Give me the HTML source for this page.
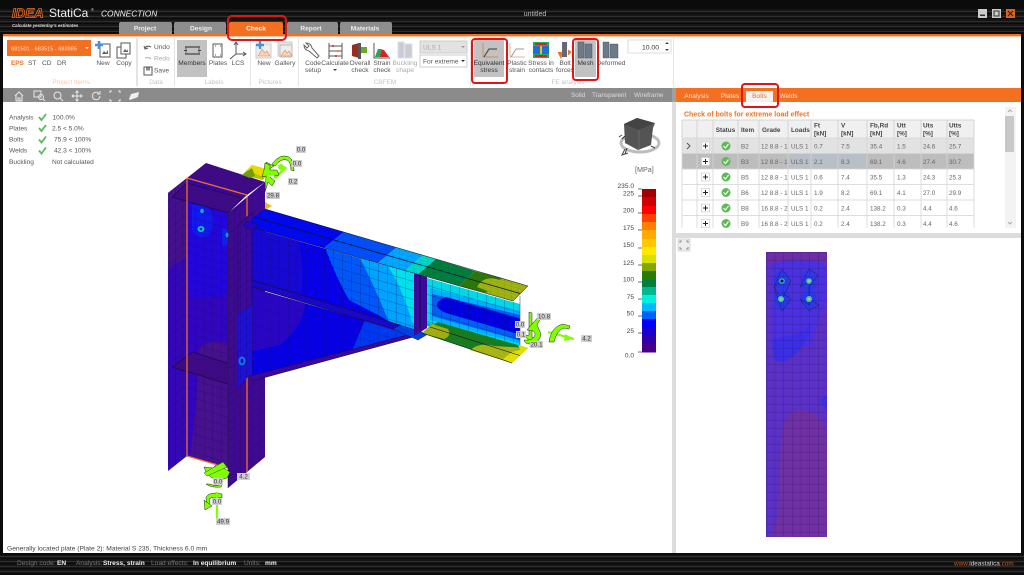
<!DOCTYPE html>
<html><head><meta charset="utf-8"><title>IDEA StatiCa Connection</title>
<style>
html,body{margin:0;padding:0;background:#fff;width:1024px;height:575px;overflow:hidden}
svg{display:block;position:absolute;left:0;top:0;filter:blur(.3px)}
text{font-family:"Liberation Sans",sans-serif;font-size:6.6px;fill:#444}
.c{text-anchor:middle}.e{text-anchor:end}
.r{fill:#555}.g{fill:#c4c4c4;font-size:6.4px}.t{fill:#666;font-size:6.3px}.h{fill:#444;font-size:6.4px;font-weight:bold}
.w{fill:#ddd;font-size:6.4px}.tab{fill:#eee;font-weight:bold;font-size:6.6px;text-anchor:middle}
.lb{fill:#333;font-size:6.2px;text-anchor:middle}.tag{fill:#d2d2d2}
.ic{fill:none;stroke:#555;stroke-width:1}
.ar{fill:#80ff00;stroke:#222;stroke-width:.5}
</style></head><body>
<svg width="1024" height="575" viewBox="0 0 1024 575" xmlns="http://www.w3.org/2000/svg">
<defs>
<pattern id="st" width="40" height="5" patternUnits="userSpaceOnUse"><rect width="40" height="5" fill="#161616"/><rect y="1" width="40" height="1" fill="#2e2e2e"/><rect y="3" width="40" height="1" fill="#0a0a0a"/></pattern>
<pattern id="gL" width="6.5" height="9" patternUnits="userSpaceOnUse" patternTransform="skewY(-38)"><path d="M0 0H6.5M0 0V9" stroke="#1a0a50" stroke-width=".45" fill="none"/></pattern>
<pattern id="gF" width="6.2" height="9" patternUnits="userSpaceOnUse" patternTransform="translate(228 0) skewY(-40)"><path d="M0 0H6.2M0 0V9" stroke="#1a0a50" stroke-width=".45" fill="none"/></pattern>
<pattern id="gW" width="8.5" height="9" patternUnits="userSpaceOnUse" patternTransform="translate(187 0) skewY(16.3)"><path d="M0 0H8.5M0 0V9" stroke="#150a50" stroke-width=".45" fill="none"/></pattern>
<pattern id="gB" width="9" height="9" patternUnits="userSpaceOnUse" patternTransform="translate(252 0) skewY(16.3)"><path d="M0 0H9M0 0V9" stroke="#0a1050" stroke-width=".45" fill="none"/></pattern>
<pattern id="gS" width="7" height="3.5" patternUnits="userSpaceOnUse" patternTransform="skewY(16.3)"><path d="M0 0H7M0 0V3.5" stroke="#2a1460" stroke-width=".25" fill="none"/></pattern>
<pattern id="gP" width="8.7" height="8" patternUnits="userSpaceOnUse" patternTransform="translate(766 252)"><path d="M0 0H8.7M0 0V8" stroke="#2a1060" stroke-width=".45" fill="none"/></pattern>
<clipPath id="cw"><polygon points="427,278 520,304 520,352 427,326"/></clipPath>
<clipPath id="cb"><polygon points="252,228 415,274 415,332 252,286"/></clipPath>
<clipPath id="ch"><polygon points="252,288 415,335 252,378"/></clipPath>
<clipPath id="cp"><rect x="766" y="252" width="61" height="285"/></clipPath>
<clipPath id="ct"><rect x="680" y="118" width="296" height="110"/></clipPath>
<clipPath id="cwf"><polygon points="187,178 228,190 228,468 187,456"/></clipPath>
<clipPath id="clf"><polygon points="168,193 187,178 187,456 168,471"/></clipPath>
<clipPath id="cff"><polygon points="228,213 265,182 265,457 228,488"/></clipPath>
<clipPath id="cep"><polygon points="238,225 252,212 252,372 238,388"/></clipPath>
</defs>

<!-- frame -->
<rect width="1024" height="575" fill="#0b0b0b"/>
<rect x="0" y="8" width="1024" height="24" fill="url(#st)"/>
<rect x="0" y="555" width="1024" height="18" fill="url(#st)"/>
<rect x="3" y="36" width="1018" height="517" fill="#fff"/>
<rect x="3" y="34" width="1018" height="2.4" fill="#f37021"/>

<!-- logo -->
<text x="12" y="17.500" style="font-size:13px;font-weight:bold;font-style:italic;fill:#0b0b0b;stroke:#f37021;stroke-width:.8;letter-spacing:.2px">IDEA</text>
<text x="49" y="17" style="font-size:12px;fill:#eee">StatiCa</text>
<text x="91" y="11" style="font-size:4px;fill:#ddd">®</text>
<text x="101" y="16.500" style="font-size:8.400px;font-style:italic;fill:#eee">CONNECTION</text>
<text x="12" y="27" style="font-size:4.400px;font-style:italic;fill:#ddd;font-weight:bold">Calculate yesterday's estimates</text>
<text x="535" y="16" class="c" style="font-size:7px;fill:#bbb">untitled</text>

<!-- window buttons -->
<rect x="978" y="9" width="9" height="9" fill="#ccc"/><rect x="980" y="14.500" width="5" height="1.500" fill="#333"/>
<rect x="992" y="9" width="9" height="9" fill="#ccc"/><rect x="994" y="11" width="5" height="5" fill="none" stroke="#333"/>
<rect x="1006" y="9" width="9" height="9" fill="#d8651c"/><path d="M1008 11l5 5M1013 11l-5 5" stroke="#222" stroke-width="1.100"/>

<!-- top tabs -->
<path d="M119 34V24q0-2 2-2h49q2 0 2 2V34z" fill="#8e8e8e"/>
<path d="M174 34V24q0-2 2-2h48q2 0 2 2V34z" fill="#8e8e8e"/>
<path d="M229 34V24q0-2 2-2h50q2 0 2 2V34z" fill="#f37021"/>
<path d="M287 34V24q0-2 2-2h47q2 0 2 2V34z" fill="#8e8e8e"/>
<path d="M340 34V24q0-2 2-2h48q2 0 2 2V34z" fill="#8e8e8e"/>
<text x="145" y="30.500" class="tab">Project</text><text x="201" y="30.500" class="tab">Design</text><text x="256" y="30.500" class="tab" style="fill:#fff">Check</text><text x="311" y="30.500" class="tab">Report</text><text x="365" y="30.500" class="tab">Materials</text>

<!-- ribbon -->
<rect x="7" y="40" width="84" height="16" fill="#f37021"/>
<text x="11" y="50.500" style="font-size:5.600px;fill:#ffd9c0">681501 - 683515 - 683985</text><path d="M85 47h4l-2 2z" fill="#fff"/>
<text x="11" y="65" style="fill:#f37021;font-weight:bold;font-size:6.400px">EPS</text><text x="28" y="65" class="r">ST</text><text x="42" y="65" class="r">CD</text><text x="57" y="65" class="r">DR</text>
<text x="71" y="84" class="c" style="fill:#f9c8a8;font-size:6.400px">Project Items</text>
<g fill="#e4e4e4"><rect x="136" y="38" width="2" height="48"/><rect x="174" y="38" width="1" height="48"/><rect x="250" y="38" width="1" height="48"/><rect x="298" y="38" width="1" height="48"/><rect x="470" y="38" width="1" height="48"/><rect x="673" y="38" width="1" height="48"/></g>

<!-- New/Copy icons -->
<rect x="100" y="44" width="10" height="13" fill="#fff" stroke="#555"/><path d="M102 54l2-3 2 2 2-3v4z" fill="#567"/><path d="M99 41v8M95 45h8" stroke="#4a90d9" stroke-width="2.600"/>
<rect x="117" y="47" width="9" height="11" fill="#fff" stroke="#555"/><rect x="121" y="43" width="9" height="11" fill="#fff" stroke="#555"/><path d="M123 52l2-3 2 2 1-2v3z" fill="#567"/>
<text x="103" y="65" class="c r">New</text><text x="124" y="65" class="c r">Copy</text>
<!-- Data -->
<path d="M145 48q2-3 6-1M144 46l1 3 3-1" class="ic" stroke-width="1.200"/>
<text x="154" y="49" class="r">Undo</text>
<path d="M151 59q-2-2-6-1" fill="none" stroke="#aaa"/><text x="154" y="60.500" style="fill:#aaa">Redo</text>
<rect x="144" y="67" width="8" height="8" class="ic"/><rect x="146" y="67.500" width="4" height="3" fill="#888"/>
<text x="154" y="72.500" class="r">Save</text>
<text x="156" y="84" class="c g">Data</text>
<!-- Labels -->
<rect x="177" y="40" width="30" height="37" fill="#c2c2c2"/>
<path d="M185 47h15M185 54h15" stroke="#444" stroke-width="1.400"/><rect x="186" y="47" width="13" height="7" fill="none" stroke="#666"/><path d="M184 50.500h3M198 50.500h3" stroke="#444"/>
<text x="192" y="65" class="c" style="fill:#333">Members</text>
<rect x="213" y="44" width="9" height="13" class="ic"/><path d="M215 46h1M220 46h1M215 55h1M220 55h1" stroke="#555"/>
<text x="218" y="65" class="c r">Plates</text>
<path d="M236 43v11h9M236 54l-6 5M234 45l2-3 2 3M243 52l3 2-3 2" class="ic"/>
<text x="238" y="65" class="c r">LCS</text>
<text x="214" y="84" class="c g">Labels</text>
<!-- Pictures -->
<rect x="256" y="44" width="15" height="14" fill="#eee" stroke="#ccc"/><path d="M258 56l4-7 3 4 2-2 3 5z" fill="#f7d2b8" stroke="#e58a55" stroke-width=".6"/><path d="M260 41v8M256 45h8" stroke="#4a90d9" stroke-width="2.400"/>
<rect x="278" y="42" width="14" height="14" fill="#e4e4e4" stroke="#ccc"/><rect x="280" y="45" width="12" height="12" fill="#eee" stroke="#bbb"/><path d="M281 56l4-6 2 3 2-2 3 5z" fill="#f7d2b8" stroke="#e58a55" stroke-width=".6"/>
<text x="264" y="65" class="c r">New</text><text x="285" y="65" class="c r">Gallery</text>
<text x="270" y="84" class="c g">Pictures</text>
<!-- CBFEM -->
<path d="M306 43q5 0 6 5l7 8-2 2-8-7q-5-1-5-6l3 3 2-2z" fill="#fff" stroke="#666"/>
<path d="M329 43v16M342 43v16M329 46h13M329 51h13M329 56h13" stroke="#555"/><circle cx="333" cy="46" r="1.100" fill="#d33"/><circle cx="338" cy="51" r="1.100" fill="#d80"/><circle cx="336" cy="56" r="1.100" fill="#d33"/>
<path d="M352 45l7-2v15l-7-2z" fill="#9b2d20"/><path d="M358 47h9v6h-7z" fill="#6aa830"/><rect x="358" y="43" width="3" height="16" fill="#555"/>
<path d="M374 43v15h16" class="ic"/><path d="M375 57l3-8 6 1 5 7z" fill="#e02020"/><path d="M375 57l3-8 4 0-2 8z" fill="#30a060"/>
<g fill="#c9cdd2" stroke="#dde"><rect x="398" y="42" width="6" height="16"/><rect x="405" y="44" width="7" height="14"/></g>
<text x="313" y="65" class="c r">Code</text><text x="313" y="72" class="c r">setup</text>
<text x="335" y="65" class="c r">Calculate</text><path d="M333 69h4l-2 2z" fill="#444"/>
<text x="360" y="65" class="c r">Overall</text><text x="360" y="72" class="c r">check</text>
<text x="382" y="65" class="c r">Strain</text><text x="382" y="72" class="c r">check</text>
<text x="405" y="65" class="c" style="fill:#aaa">Buckling</text><text x="405" y="72" class="c" style="fill:#aaa">shape</text>
<text x="385" y="84" class="c g">CBFEM</text>
<rect x="420" y="41" width="47" height="12" fill="#e2e2e2" stroke="#ccc"/><text x="423" y="49.500" style="fill:#aaa">ULS 1</text><path d="M461 46h4l-2 2z" fill="#999"/>
<rect x="420" y="55" width="47" height="12" fill="#fff" stroke="#ccc"/><text x="423" y="63.500" class="r">For extreme</text><path d="M461 60h4l-2 2z" fill="#333"/>
<!-- FE analysis -->
<rect x="474" y="40" width="30" height="37" fill="#c2c2c2"/>
<path d="M483 43v14h15" fill="none" stroke="#d98a5a"/><path d="M484 57l5-8h8" fill="none" stroke="#555" stroke-width="1.200"/>
<text x="489" y="65" class="c" style="fill:#333">Equivalent</text><text x="489" y="72" class="c" style="fill:#333">stress</text>
<path d="M510 43v14h15" fill="none" stroke="#e8b090"/><path d="M511 57l5-8h8" fill="none" stroke="#999"/>
<text x="517" y="65" class="c r">Plastic</text><text x="517" y="72" class="c r">strain</text>
<rect x="533" y="42" width="16" height="16" fill="#2070d0"/><rect x="533" y="42" width="16" height="4" fill="#20b060"/><rect x="533" y="54" width="16" height="4" fill="#20b060"/><rect x="535" y="43" width="12" height="2" fill="#e02020"/><rect x="535" y="55" width="12" height="2" fill="#e02020"/><rect x="540" y="46" width="2" height="8" fill="#e8c020"/>
<text x="541" y="65" class="c r">Stress in</text><text x="541" y="72" class="c r">contacts</text>
<rect x="562" y="42" width="5" height="15" fill="#667"/><path d="M558 52l3 6 1-6M568 50l3 2-3 3" fill="#d08030" stroke="#d08030"/>
<text x="565" y="65" class="c r">Bolt</text><text x="565" y="72" class="c r">forces</text>
<rect x="575" y="40" width="21" height="37" fill="#c2c2c2"/>
<g fill="#6d7a8a" stroke="#445" stroke-width=".4"><rect x="578" y="42" width="6" height="16"/><rect x="585" y="44" width="7" height="14"/></g>
<text x="585.500" y="65" class="c" style="fill:#333">Mesh</text>
<g fill="#6d7a8a" stroke="#445" stroke-width=".4"><rect x="603" y="42" width="6" height="16"/><rect x="610" y="44" width="8" height="14"/></g>
<text x="611" y="65" class="c r">Deformed</text>
<text x="568" y="84" class="c g">FE analysis</text>
<rect x="628" y="40" width="43" height="13" fill="#fff" stroke="#ddd"/><text x="659" y="49.500" class="e" style="fill:#333;font-size:6.800px">10.00</text><path d="M665 44h4l-2-2zM665 49h4l-2 2z" fill="#444"/>

<!-- viewport toolbar -->
<rect x="3" y="88" width="669" height="14" fill="#8b8b8b"/>
<g fill="none" stroke="#e8e8e8" stroke-width="1">
<path d="M15 96l4-4 4 4M16 95v6h6v-6M18 101v-3h2v3"/>
<rect x="34" y="91" width="7" height="6"/><circle cx="41" cy="97" r="2.500"/><path d="M43 99l2 2"/>
<circle cx="57.500" cy="95.500" r="3.500"/><path d="M60 98l3 3"/>
<path d="M72 96h10M77 91v10M73.500 94.500l-1.500 1.500 1.500 1.500M80.500 94.500l1.500 1.500-1.500 1.500M75.500 92.500l1.500-1.500 1.500 1.500M75.500 99.500l1.500 1.500 1.500-1.500"/>
<path d="M100 96a3.800 3.800 0 1 1-1.200-2.800M100 91v3h-3"/>
<path d="M110 93v-2h2M118 91h2v2M110 99v2h2M118 101h2v-2"/>
</g>
<path d="M129 99l2-5 8-2-1 5-8 3z" fill="#eee"/>
<text x="571" y="97" class="w">Solid</text><text x="592" y="97" class="w">Transparent</text><text x="634" y="97" class="w">Wireframe</text>

<!-- results summary -->
<text x="9" y="119.500" class="r">Analysis</text><text x="9" y="130.500" class="r">Plates</text><text x="9" y="141.500" class="r">Bolts</text><text x="9" y="152.500" class="r">Welds</text><text x="9" y="164" class="r">Buckling</text>
<g fill="none" stroke="#5cb85c" stroke-width="1.800"><path d="M39 117l2.500 3 4.500-6"/><path d="M39 128l2.500 3 4.500-6"/><path d="M39 139.500l2.500 3 4.500-6"/><path d="M39 150.500l2.500 3 4.500-6"/></g>
<text x="52.500" y="119.500" class="r">100.0%</text><text x="52" y="130.500" class="r">2.5 &lt; 5.0%</text><text x="54" y="141.500" class="r">75.9 &lt; 100%</text><text x="54" y="152.500" class="r">42.3 &lt; 100%</text><text x="52" y="164" class="r">Not calculated</text>

<!-- COLUMN -->
<polygon points="187,178 206,163 265,182 247,195 228,213" fill="#3f0a86"/><polygon points="187,178 206,163 265,182 247,195" fill="url(#gS)"/>
<polygon points="168,193 187,178 187,456 168,471" fill="#3408b8"/>
<g clip-path="url(#clf)"><path d="M165 190l25-15v80l-25 15z" fill="#44108e"/></g>
<polygon points="168,193 187,178 187,456 168,471" fill="url(#gL)"/>
<polygon points="187,178 228,190 228,468 187,456" fill="#3206c0"/>
<g clip-path="url(#cwf)">
<path d="M186 195L230 210V292Q205 302 192 296L186 290z" fill="#2206dc"/>
<path d="M192 205q12-3 20 8 4 12-3 22-10 6-17-4z" fill="#1218f0"/>
<path d="M222 228q6 0 8 8v10h-8z" fill="#1020ea"/>
<path d="M199 350q4-7 14-8 8-1 15 2v130h-41q10-60 12-124z" fill="#47108e"/>
<rect x="186" y="178" width="44" height="20" fill="#3408b0"/>
</g>
<polygon points="187,178 228,190 228,468 187,456" fill="url(#gW)"/>
<polygon points="172,197 187,183 242,198 228,213" fill="#3f0a86" stroke="#1a0840" stroke-width=".7"/><polygon points="172,197 187,183 242,198 228,213" fill="url(#gS)"/>
<polygon points="172,367 193,352 230,364 228,384" fill="#3f0a86" stroke="#1a0840" stroke-width=".7"/><polygon points="172,367 193,352 230,364 228,384" fill="url(#gS)"/>
<path d="M187 178l60 17M187 178V456M187 456l41 12" stroke="#f37021" stroke-width="1.300" fill="none"/>
<polygon points="228,213 265,182 265,457 228,488" fill="#3f0a92"/>
<polygon points="228,213 265,182 265,457 228,488" fill="url(#gF)"/>
<path d="M247 197V472" stroke="#f37021" stroke-width="1.300"/>
<path d="M228 213V488" stroke="#222" stroke-width=".5"/>
<ellipse cx="202" cy="211" rx="1.800" ry="2.200" fill="#18a8f0"/><ellipse cx="201" cy="229" rx="3.500" ry="3" fill="#10c0d8"/><circle cx="201" cy="229" r="1.400" fill="#2030a0"/><ellipse cx="227" cy="235" rx="1.500" ry="2.500" fill="#1090f0"/>

<!-- top markers -->
<polygon points="242,175 252,165 270,170 263,180" fill="#b8c400"/><polygon points="247,170 252,165 270,170 263,177" fill="#e8d800"/><polygon points="242,175 252,168 255,176 250,178" fill="#6c9c10"/>
<polygon points="265,202 272,206 265,210" fill="#f0b820"/>

<!-- BEAM -->
<polygon points="252,228 415,274 415,332 252,286" fill="#0800e8"/>
<g clip-path="url(#cb)">
<path d="M250 226L298 240Q305 265 301 300L250 288z" fill="#1808d4"/>
<path d="M326 250Q335 275 349 300L378 315L420 340V250L345 230z" fill="#0058f8"/>
<path d="M357 253Q372 280 388 320L420 340V260L365 240z" fill="#00a4ff"/>
<path d="M382 258Q400 280 412 322L420 330V260L392 250z" fill="#00e0ec"/>
</g>
<polygon points="252,228 415,274 415,332 252,286" fill="url(#gB)"/>
<polygon points="252,288 415,335 252,378" fill="#0800e4"/>
<g clip-path="url(#ch)"><path d="M250 285L305 302Q305 325 280 345L250 352z" fill="#2806c4"/><path d="M365 320L420 336L350 356z" fill="#0038f0"/></g>
<polygon points="252,288 415,335 252,378" fill="url(#gB)" opacity=".7"/>
<polygon points="250,376 415,333 417,336 252,381" fill="#3b0a9c" stroke="#101040" stroke-width=".5"/>
<polygon points="243,284 248,279 400,325 393,329" fill="#1c06c8" stroke="#101040" stroke-width=".6"/>
<polygon points="393,329 400,325 428,334 418,340" fill="#0040e0" stroke="#101040" stroke-width=".4"/>

<!-- web right -->
<polygon points="427,278 520,304 520,352 427,326" fill="#00d8e8"/>
<g clip-path="url(#cw)">
<path d="M430 288L525 312V345L430 320z" fill="#00b0ff"/>
<path d="M432 294L525 316V342L432 316z" fill="#0060f4"/>
<path d="M446 297L525 320V336L446 313Q428 305 446 297z" fill="#0000e0"/>
<path d="M425 322L525 350V356L425 330z" fill="#00b8a0"/>
</g>
<polygon points="427,278 520,304 520,352 427,326" fill="url(#gB)"/>
<polygon points="414,273 427,277 427,328 414,336" fill="#3a0a9a"/><path d="M420 275V332" stroke="#1b0a50"/>
<path d="M520 296V346" stroke="#555" stroke-width=".6"/>

<!-- top flange -->
<polygon points="243,225 265,209 344,232 324,248" fill="#0008f0"/>
<polygon points="324,248 344,232 396.500,247.500 378,263" fill="#0050fa"/>
<polygon points="378,263 396.500,247.500 423,255 405,271" fill="#00a8ff"/>
<polygon points="405,271 423,255 436,259 418.500,274" fill="#00d8c8"/>
<polygon points="418.500,274 436,259 475,271 459,286" fill="#007f3c"/>
<polygon points="459,286 475,271 502,278 486,293" fill="#2a7a08"/>
<polygon points="486,293 502,278 528,286 513,301" fill="#92ae10"/>
<path d="M477 287q6-11 19-8l32 7-15 15z" fill="#a0b410"/>
<path d="M254 217L520 293.500" stroke="#0b1040" stroke-width=".8"/>
<path d="M243 225L513 301M265 209L528 286M513 301L528 286" stroke="#111" stroke-width=".5"/>
<polygon points="243,225 265,209 528,286 513,301" fill="url(#gS)" opacity=".5"/>

<!-- bottom flange right -->
<polygon points="422,333 438,322 528,348 512,363" fill="#1a7a20"/>
<path d="M422 333l10-9 16 5q4 7-4 10z" fill="#a0ac10"/>
<path d="M470 350q10-8 24-4l34 2-16 15z" fill="#a6b414"/>
<polygon points="503,359 512,352 528,348 512,363" fill="#e0e000"/>
<polygon points="518,345 528,348 522,353" fill="#e0e000"/>
<path d="M430 327L520 355.500M422 333L512 363" stroke="#112" stroke-width=".6"/>

<!-- end plate -->
<polygon points="238,225 252,212 252,372 238,388" fill="#3c0a9c" stroke="#1a0a50" stroke-width=".5"/>
<g clip-path="url(#cep)"><path d="M235 315q10-5 20-12v75l-20 15z" fill="#1d10d8"/></g>
<polygon points="238,225 252,212 252,372 238,388" fill="url(#gF)"/>
<ellipse cx="242" cy="361" rx="3.500" ry="4.500" fill="#0c78f0"/><ellipse cx="242" cy="361" rx="1.500" ry="2.500" fill="#1010a0"/>
<polygon points="243,225 248,221 258,225 252,231" fill="#2406c4" stroke="#111" stroke-width=".4"/>

<!-- top load arrows -->
<path d="M272 164q8-11 17-7 5 3 5 14l-3-1q0-8-4-10-6-2-12 6z" class="ar"/>
<path d="M271 168l-4 3-1-9 8 4z" class="ar"/>
<path d="M273 178l12-12 2 2-11 11z" fill="#80ff00"/>
<circle cx="281" cy="167" r="3" fill="#80ff00"/>
<polygon class="ar" points="265,163 270,165 270,170 277,170 279,175 270,177 275,181 272,186 268,182 265,192 266,176 262,177 264,170"/>
<rect x="269" y="175" width="5" height="2" fill="#fff"/>

<!-- right load arrows -->
<polygon class="ar" points="529,312 532,313 532,337 538,340 531,343 526,337 524,336 529,335"/>
<path d="M527 330l12-14 2 2-4 7 4 9q-1 9-11 10-5 0-6-4 9 1 11-5 1-5-8-5z" class="ar"/>
<path d="M548 332l26 7" stroke="#80ff00" stroke-width="2"/>
<polygon points="565,334 574,339 564,341" fill="#80ff00"/>
<path d="M549 342q2-15 14-18l7 2-1 3-5-1q-7 2-10 14z" class="ar"/>

<!-- bottom load arrows -->
<path d="M217 464l8 5 5 3-3 6-7 2q-10-1-14-8l-2-5 9 1z" class="ar"/>
<path d="M204 473l19-11 4 5-20 9z" fill="#80ff00" stroke="#222" stroke-width=".4"/>
<path d="M206 484q5 4 15 3l2-6q-3 7-14 3z" class="ar"/>
<path d="M222 494q-12-3-16 3 0 3 1 7l3-1-1-4q4-3 13-1z" class="ar"/>
<polygon class="ar" points="204,500 212,506 205,510"/>
<path d="M217 492V519" stroke="#80ff00" stroke-width="2.200"/>

<!-- tags -->
<g fill="#d0d0d0"><rect x="296" y="146" width="10" height="7"/><rect x="292" y="160" width="10" height="7"/><rect x="288" y="178" width="10" height="7"/><rect x="266" y="192" width="14" height="7"/><rect x="537" y="313" width="14" height="7"/><rect x="515" y="321" width="10" height="7"/><rect x="516" y="331" width="10" height="7"/><rect x="530" y="341" width="13" height="7"/><rect x="581" y="335" width="11" height="7"/><rect x="237" y="473" width="13" height="7"/><rect x="213" y="478" width="10" height="7"/><rect x="212" y="498" width="10" height="7"/><rect x="216" y="518" width="14" height="7"/></g>
<g>
<text x="301" y="151.500" class="lb">0.0</text><text x="297" y="165.500" class="lb">0.0</text><text x="293" y="183.500" class="lb">0.2</text><text x="273" y="197.500" class="lb">29.8</text>
<text x="544" y="318.500" class="lb">10.8</text><text x="520" y="326.500" class="lb">0.0</text><text x="521" y="336.500" class="lb">0.1</text><text x="536.500" y="346.500" class="lb">20.1</text><text x="586.500" y="340.500" class="lb">4.2</text>
<text x="243.500" y="478.500" class="lb">4.2</text><text x="218" y="483.500" class="lb">0.0</text><text x="217" y="503.500" class="lb">0.0</text><text x="223" y="523.500" class="lb">49.9</text>
</g>

<!-- nav cube -->
<ellipse cx="640" cy="143" rx="19" ry="9" fill="none" stroke="#bdbdbd" stroke-width="3"/>
<path d="M624 124l13-6 18 5-2 5-2 17-13 5-13-7z" fill="#545454"/><path d="M624 124l15 6 15-7-17-5z" fill="#444"/><path d="M639 130l0 20" stroke="#777" stroke-width=".6"/><path d="M625 136l-3 3M625 154l2-6" stroke="#333"/>
<path d="M651 146l4 2M622 135l-3 2M625 149l-3 6 6-2" fill="none" stroke="#444"/>
<text x="635" y="172" style="font-size:7.200px;fill:#666">[MPa]</text>

<!-- legend -->
<g>
<rect x="642" y="189" width="14" height="8" fill="#a00000"/><rect x="642" y="197" width="14" height="9" fill="#d00000"/><rect x="642" y="206" width="14" height="8" fill="#ff0000"/><rect x="642" y="214" width="14" height="8" fill="#ff4000"/><rect x="642" y="222" width="14" height="8" fill="#ff8000"/><rect x="642" y="230" width="14" height="9" fill="#ffaa00"/><rect x="642" y="239" width="14" height="8" fill="#ffc800"/><rect x="642" y="247" width="14" height="8" fill="#ffe800"/><rect x="642" y="255" width="14" height="8" fill="#d8e000"/><rect x="642" y="263" width="14" height="8" fill="#80a800"/><rect x="642" y="271" width="14" height="8" fill="#2a7a00"/><rect x="642" y="279" width="14" height="8" fill="#008040"/><rect x="642" y="287" width="14" height="8" fill="#00b890"/><rect x="642" y="295" width="14" height="8" fill="#00f0e0"/><rect x="642" y="303" width="14" height="8" fill="#00b8ff"/><rect x="642" y="311" width="14" height="8" fill="#0060ff"/><rect x="642" y="319" width="14" height="9" fill="#0000ff"/><rect x="642" y="328" width="14" height="8" fill="#1800d0"/><rect x="642" y="336" width="14" height="8" fill="#3000a8"/><rect x="642" y="344" width="14" height="8.500" fill="#480088"/>
</g>
<path d="M638 189h4M638 196h4M638 213h4M638 230h4M638 248h4M638 265h4M638 282h4M638 299h4M638 316h4M638 333h4M638 352h4" stroke="#444" stroke-width=".7"/>
<g style="fill:#444"><text x="634" y="188" class="e">235.0</text><text x="634" y="195.500" class="e">225</text><text x="634" y="212.500" class="e">200</text><text x="634" y="230" class="e">175</text><text x="634" y="247" class="e">150</text><text x="634" y="265" class="e">125</text><text x="634" y="281.500" class="e">100</text><text x="634" y="299" class="e">75</text><text x="634" y="315.500" class="e">50</text><text x="634" y="333" class="e">25</text><text x="634" y="357.500" class="e">0.0</text></g>

<text x="7" y="550.500" style="font-size:6.700px;fill:#444">Generally located plate (Plate 2): Material S 235, Thickness 6.0 mm</text>

<!-- right divider -->
<rect x="672" y="88" width="4" height="465" fill="#dcdcdc"/>
<rect x="672" y="88" width="4" height="14" fill="#a0a0a0"/>
<rect x="676" y="233" width="345" height="5" fill="#dcdcdc"/>

<!-- right tabs -->
<rect x="676" y="88" width="345" height="14" fill="#f37021"/>
<rect x="746" y="91" width="27" height="11" fill="#f2f2f2"/>
<text x="696.500" y="98" class="c" style="fill:#fde0cc">Analysis</text><text x="730" y="98" class="c" style="fill:#fde0cc">Plates</text><text x="759.500" y="98" class="c" style="fill:#f37021">Bolts</text><text x="788.500" y="98" class="c" style="fill:#fde0cc">Welds</text>

<!-- table -->
<text x="684" y="116.500" style="fill:#f37021;font-weight:bold;font-size:7px">Check of bolts for extreme load effect</text>
<rect x="682" y="120" width="292" height="18" fill="#f0f0f0"/>
<g clip-path="url(#ct)">
<rect x="682" y="138" width="292" height="15.500" fill="#e2e2e2"/>
<rect x="682" y="153.500" width="292" height="15.500" fill="#bdbdbd"/>
<rect x="788" y="154" width="80" height="14" fill="#b4c0cc" opacity=".6"/>
<g stroke="#d4d4d4" stroke-width=".8"><path d="M682 120h292M682 138h292M682 153.500h292M682 169h292M682 184.500h292M682 200h292M682 215.500h292"/><path d="M682 120v110M697 120v110M713 120v110M738 120v110M759 120v110M788 120v110M811 120v110M838 120v110M867 120v110M894 120v110M921 120v110M947 120v110M974 120v110"/></g>
<path d="M687 143l3 3-3 3" fill="none" stroke="#555"/>
<g fill="#fff" stroke="#ccc" stroke-width=".7"><rect x="701.500" y="142" width="8" height="8"/><rect x="701.500" y="157.500" width="8" height="8"/><rect x="701.500" y="173" width="8" height="8"/><rect x="701.500" y="188.500" width="8" height="8"/><rect x="701.500" y="204" width="8" height="8"/><rect x="701.500" y="219.500" width="8" height="8"/></g>
<path d="M705.500 143.500v5M703 146h5M705.500 159v5M703 161.500h5M705.500 174.500v5M703 177h5M705.500 190v5M703 192.500h5M705.500 205.500v5M703 208h5M705.500 221v5M703 223.500h5" stroke="#222"/>
<g fill="#5dbb55"><circle cx="726" cy="146" r="4.500"/><circle cx="726" cy="161.500" r="4.500"/><circle cx="726" cy="177" r="4.500"/><circle cx="726" cy="192.500" r="4.500"/><circle cx="726" cy="208" r="4.500"/><circle cx="726" cy="223.500" r="4.500"/></g>
<path d="M723.500 146l2 2 3-4M723.500 161.500l2 2 3-4M723.500 177l2 2 3-4M723.500 192.500l2 2 3-4M723.500 208l2 2 3-4M723.500 223.500l2 2 3-4" fill="none" stroke="#fff" stroke-width="1.100"/>
<g class="rows">
<text x="741" y="148.500" class="t">B2</text><text x="761" y="148.500" class="t">12 8.8 - 1</text><text x="791" y="148.500" class="t">ULS 1</text><text x="814" y="148.500" class="t">0.7</text><text x="841" y="148.500" class="t">7.5</text><text x="870" y="148.500" class="t">35.4</text><text x="897" y="148.500" class="t">1.5</text><text x="923" y="148.500" class="t">24.6</text><text x="949" y="148.500" class="t">25.7</text>
<text x="741" y="164" class="t">B3</text><text x="761" y="164" class="t">12 8.8 - 1</text><text x="791" y="164" class="t">ULS 1</text><text x="814" y="164" class="t">2.1</text><text x="841" y="164" class="t">8.3</text><text x="870" y="164" class="t">69.1</text><text x="897" y="164" class="t">4.6</text><text x="923" y="164" class="t">27.4</text><text x="949" y="164" class="t">30.7</text>
<text x="741" y="179.500" class="t">B5</text><text x="761" y="179.500" class="t">12 8.8 - 1</text><text x="791" y="179.500" class="t">ULS 1</text><text x="814" y="179.500" class="t">0.6</text><text x="841" y="179.500" class="t">7.4</text><text x="870" y="179.500" class="t">35.5</text><text x="897" y="179.500" class="t">1.3</text><text x="923" y="179.500" class="t">24.3</text><text x="949" y="179.500" class="t">25.3</text>
<text x="741" y="195" class="t">B6</text><text x="761" y="195" class="t">12 8.8 - 1</text><text x="791" y="195" class="t">ULS 1</text><text x="814" y="195" class="t">1.9</text><text x="841" y="195" class="t">8.2</text><text x="870" y="195" class="t">69.1</text><text x="897" y="195" class="t">4.1</text><text x="923" y="195" class="t">27.0</text><text x="949" y="195" class="t">29.9</text>
<text x="741" y="210.500" class="t">B8</text><text x="761" y="210.500" class="t">16 8.8 - 2</text><text x="791" y="210.500" class="t">ULS 1</text><text x="814" y="210.500" class="t">0.2</text><text x="841" y="210.500" class="t">2.4</text><text x="870" y="210.500" class="t">138.2</text><text x="897" y="210.500" class="t">0.3</text><text x="923" y="210.500" class="t">4.4</text><text x="949" y="210.500" class="t">4.6</text>
<text x="741" y="226" class="t">B9</text><text x="761" y="226" class="t">16 8.8 - 2</text><text x="791" y="226" class="t">ULS 1</text><text x="814" y="226" class="t">0.2</text><text x="841" y="226" class="t">2.4</text><text x="870" y="226" class="t">138.2</text><text x="897" y="226" class="t">0.3</text><text x="923" y="226" class="t">4.4</text><text x="949" y="226" class="t">4.6</text>
</g>
</g>
<g stroke="#d4d4d4" stroke-width=".8"><path d="M682 120h292M682 120v18M697 120v18M713 120v18M738 120v18M759 120v18M788 120v18M811 120v18M838 120v18M867 120v18M894 120v18M921 120v18M947 120v18M974 120v18"/></g>
<text x="725.500" y="132" class="h c">Status</text><text x="741" y="132" class="h">Item</text><text x="762" y="132" class="h">Grade</text><text x="791" y="132" class="h">Loads</text>
<text x="814" y="127.500" class="h">Ft</text><text x="814" y="135.500" class="h">[kN]</text><text x="841" y="127.500" class="h">V</text><text x="841" y="135.500" class="h">[kN]</text><text x="870" y="127.500" class="h">Fb,Rd</text><text x="870" y="135.500" class="h">[kN]</text><text x="897" y="127.500" class="h">Utt</text><text x="897" y="135.500" class="h">[%]</text><text x="923" y="127.500" class="h">Uts</text><text x="923" y="135.500" class="h">[%]</text><text x="949" y="127.500" class="h">Utts</text><text x="949" y="135.500" class="h">[%]</text>
<rect x="1005" y="107" width="11" height="121" fill="#f3f3f3"/><rect x="1005" y="116" width="9" height="36" fill="#c8c8c8"/>
<path d="M1008 112l2-2 2 2M1008 222l2 2 2-2" fill="none" stroke="#aaa"/>

<!-- lower panel -->
<rect x="678" y="239" width="12" height="12" fill="#eee" stroke="#ccc" stroke-width=".7"/>
<path d="M680 243v-2h2M686 241h2v2M680 247v2h2M686 249h2v-2" fill="none" stroke="#777" stroke-width=".8"/>
<rect x="766" y="252" width="61" height="285" fill="#5a30c8"/>
<g clip-path="url(#cp)">
<rect x="766" y="252" width="61" height="12" fill="#6d2da8"/>
<path d="M771 264q20-6 52-2l4 8v30l-10 22-4 22-16 4q-12 2-20 8-4 2-5-10z" fill="#4a30e0"/>
<path d="M772 340q12-3 22-5 13-4 16-12l0 8q-10 26-28 31-8 1-9-8z" fill="#3a2ee8"/>
<path d="M781 440q2-30 20-30 18 0 25 20l1 10v97h-57l8-20z" fill="#7030a4"/>
<path d="M820 400l7-6v18z" fill="#3a2ee8"/>
<ellipse cx="782" cy="281" rx="8" ry="10" fill="#2c38e8"/><ellipse cx="782" cy="299" rx="8" ry="10" fill="#2c38e8"/><ellipse cx="809" cy="281" rx="8" ry="11" fill="#2c38e8"/><ellipse cx="809" cy="299" rx="8" ry="10" fill="#2c38e8"/>
<rect x="766" y="252" width="61" height="285" fill="url(#gP)"/>
<path d="M782 281l-8 6 8-18 9 12-9 18-8-12 8 24 9-12-9-6M809 281l-9 6 9-18 9 6-9 12v18l-9-6 9 12 10-6-10-6" fill="none" stroke="#181050" stroke-width=".4"/>
<circle cx="782" cy="281" r="2.800" fill="#22c0d0"/><circle cx="782" cy="281" r="1.500" fill="#111"/>
<circle cx="809" cy="281" r="2.800" fill="#40c8b0"/><circle cx="809" cy="281" r="1.200" fill="#c0c060"/>
<circle cx="781" cy="299" r="3" fill="#40c8b0"/><circle cx="781" cy="299" r="1.300" fill="#c0c060"/>
<circle cx="809" cy="299" r="3" fill="#40c8b0"/><circle cx="809" cy="299" r="1.300" fill="#c0c060"/>
</g>

<!-- status bar -->
<g style="font-size:6.400px"><text x="17" y="565" style="fill:#777">Design code:</text><text x="57" y="565" style="fill:#eee;font-weight:bold">EN</text><text x="76" y="565" style="fill:#777">Analysis:</text><text x="103" y="565" style="fill:#eee;font-weight:bold">Stress, strain</text><text x="151" y="565" style="fill:#777">Load effects:</text><text x="193" y="565" style="fill:#eee;font-weight:bold">In equilibrium</text><text x="244" y="565" style="fill:#777">Units:</text><text x="265" y="565" style="fill:#eee;font-weight:bold">mm</text></g>
<text x="954" y="565.500" style="font-size:6.400px;fill:#c8591c">www.<tspan style="fill:#ddd">ideastatica</tspan>.com</text>

<!-- red highlights -->
<g fill="none" stroke="#e01515" stroke-width="2"><rect x="228" y="16" width="58" height="24" rx="4"/><rect x="472" y="39" width="35" height="44" rx="3"/><rect x="573" y="39" width="25" height="41" rx="3"/><rect x="742" y="84" width="36" height="23" rx="3"/></g>
</svg>
</body></html>
